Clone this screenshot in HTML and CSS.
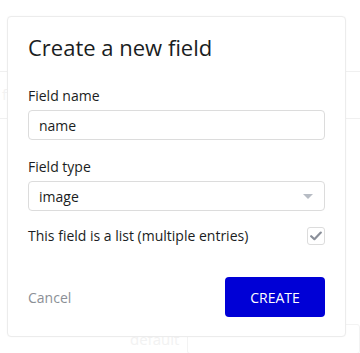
FILE: index.html
```html
<!DOCTYPE html>
<html lang="en">
<head>
    <meta charset="UTF-8">
    <meta name="viewport" content="width=device-width, initial-scale=1.0">
    <title>Create a new field</title>
    <link rel="stylesheet" href="styles.css">
</head>
<body>
    <!-- page behind the popup -->
    <div class="page">
        <div class="page-line"></div>
        <div class="page-row">
            <span class="page-letter">f</span>
        </div>
        <div class="page-bottom">
            <span class="page-label">default</span>
            <div class="page-select"></div>
        </div>
    </div>

    <div class="popup">
        <h1 class="title">Create a new field</h1>

        <form class="form">
            <label for="fieldName" class="label">Field name</label>
            <input type="text" id="fieldName" class="input" value="name">

            <label for="fieldType" class="label">Field type</label>
            <div class="select">
                <span>image</span>
                <span class="caret"></span>
            </div>

            <div class="list-row">
                <span>This field is a list (multiple entries)</span>
                <span class="checkbox">
                    <svg width="12" height="10" viewBox="0 0 12 10">
                        <path d="M1.2 5.2 L4.4 8.2 L10.8 1.6" fill="none" stroke="#8a8f99" stroke-width="2.2" stroke-linecap="round" stroke-linejoin="round"/>
                    </svg>
                </span>
            </div>

            <div class="actions">
                <span class="cancel">Cancel</span>
                <button type="button" class="primary-button">CREATE</button>
            </div>
        </form>
    </div>
</body>
</html>
```

FILE: styles.css
```css
:root {
  --white: #FFFFFF;
  --text: #1a1d22;
  --border: #dcdcdc;
  --faint: #f0f0f0;
  --blue: #0000d6;
}
body {
  margin: 0;
  font-family: 'Open Sans', sans-serif;
  background-color: var(--white);
  color: var(--text);
}

/* faint page behind */
.page {
  height: 353px;
  overflow: hidden;
  display: flex;
  flex-direction: column;
}
.page-line {
  margin-top: 71px;
  border-top: 1px solid var(--faint);
}
.page-row {
  height: 46px;
  border-bottom: 1px solid var(--faint);
}
.page-letter {
  display: block;
  padding: 12px 0 0 2px;
  font-size: 15px;
  color: #f2f2f2;
}
.page-bottom {
  margin-top: auto;
  display: flex;
  align-items: center;
  height: 28px;
  padding-left: 130px;
}
.page-label {
  font-size: 15px;
  color: #f2f2f2;
  width: 57px;
}
.page-select {
  flex: 1;
  height: 28px;
  border: 1px solid #f3f3f3;
  border-radius: 3px;
}

/* popup */
.popup {
  position: absolute;
  top: 16px;
  left: 7px;
  width: 339px;
  height: 321px;
  box-sizing: border-box;
  padding: 16px 20px 20px 20px;
  background-color: var(--white);
  border: 1px solid #ececec;
  border-radius: 4px;
  box-shadow: 0 0 2px rgba(0, 0, 0, 0.03);
}
.title {
  margin: 0 0 25px;
  font-size: 22px;
  font-weight: 400;
  line-height: 28px;
}
.form {
  display: flex;
  flex-direction: column;
}
.label {
  font-size: 14px;
  line-height: 19px;
  margin-bottom: 5px;
}
.input, .select {
  box-sizing: border-box;
  height: 30px;
  border: 1px solid var(--border);
  border-radius: 4px;
  padding: 0 10px;
  font-family: inherit;
  font-size: 14px;
  color: var(--text);
  margin-bottom: 17px;
}
.select {
  display: flex;
  align-items: center;
  justify-content: space-between;
  margin-bottom: 15px;
}
.caret {
  width: 0;
  height: 0;
  border-left: 5px solid transparent;
  border-right: 5px solid transparent;
  border-top: 5px solid #b7bcc4;
  margin-right: 1px;
}
.list-row {
  display: flex;
  align-items: center;
  justify-content: space-between;
  font-size: 14px;
}
.checkbox {
  width: 18px;
  height: 18px;
  box-sizing: border-box;
  border: 1px solid var(--border);
  border-radius: 3px;
  display: flex;
  align-items: center;
  justify-content: center;
}
.actions {
  display: flex;
  align-items: center;
  justify-content: space-between;
  margin-top: 32px;
}
.cancel {
  font-size: 14px;
  color: #8b8f96;
}
.primary-button {
  background-color: var(--blue);
  border: none;
  border-radius: 4px;
  color: var(--white);
  width: 100px;
  height: 40px;
  font-family: inherit;
  font-size: 14px;
  cursor: pointer;
}
```
